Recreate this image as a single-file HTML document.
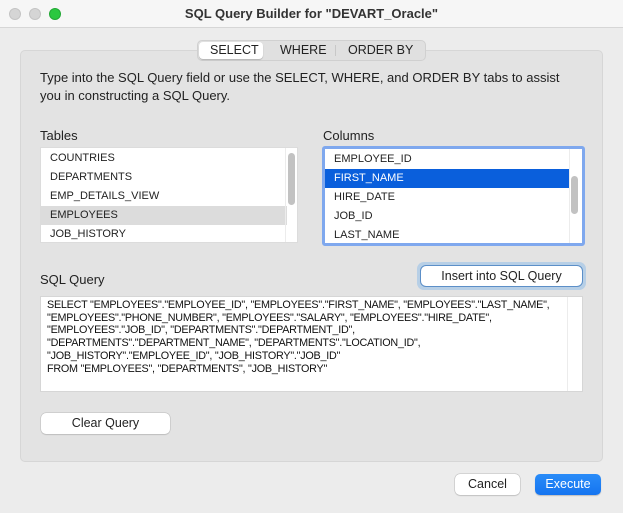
<!DOCTYPE html>
<html><head><meta charset="utf-8"><style>
*{margin:0;padding:0;box-sizing:border-box}
body{width:623px;height:513px;background:#ececec;font-family:"Liberation Sans",sans-serif;color:#222;position:relative;overflow:hidden}
.a{position:absolute}
.title{left:0;top:0;width:623px;height:28px;background:#f6f6f6;border-bottom:1px solid #d6d6d6;text-align:center;font-weight:bold;font-size:13px;line-height:28px;color:#333}
.dot{top:8px;width:12px;height:12px;border-radius:50%}
.panel{left:20px;top:50px;width:583px;height:412px;background:#e3e3e3;border:1px solid #d6d6d6;border-radius:5px}
.seg{left:197px;top:40px;width:229px;height:21px;background:#e0e0e0;border:1px solid #d0d0d0;border-radius:5px;font-size:12.5px}
.seg span{position:absolute;top:2px}
.t{font-size:13px;color:#222}
.list{background:#fff;font-size:11px;color:#222}
.row{height:19px;line-height:19px;padding-left:9px}
.sb{background:#c2c2c2;border-radius:4px;width:7px}
.btn{background:#fff;border-radius:5px;box-shadow:0 0 0 .5px #bbb,0 1px 1px rgba(0,0,0,.15);font-size:12.5px;text-align:center;color:#222}
</style></head><body>
<div class="a title">SQL Query Builder for "DEVART_Oracle"</div>
<div class="a dot" style="left:9px;background:#d5d5d5;border:1px solid #c4c4c4"></div>
<div class="a dot" style="left:29px;background:#d5d5d5;border:1px solid #c4c4c4"></div>
<div class="a dot" style="left:49px;background:#2bc840;border:1px solid #22a835"></div>
<div class="a panel"></div>
<div class="a seg">
 <div class="a" style="left:1px;top:1px;width:64px;height:17px;background:#fff;border-radius:4px;box-shadow:0 1px 1px rgba(0,0,0,.2)"></div>
 <span style="left:12px">SELECT</span><span style="left:82px">WHERE</span>
 <div class="a" style="left:137px;top:4px;width:1px;height:11px;background:#c8c8c8"></div>
 <span style="left:150px">ORDER BY</span>
</div>
<div class="a t" style="left:40px;top:69px;line-height:18px;width:535px">Type into the SQL Query field or use the SELECT, WHERE, and ORDER BY tabs to assist you in constructing a SQL Query.</div>
<div class="a t" style="left:40px;top:128px">Tables</div>
<div class="a t" style="left:323px;top:128px">Columns</div>
<div class="a list" style="left:40px;top:147px;width:258px;height:96px;border:1px solid #dcdcdc;padding-top:1px">
 <div class="row">COUNTRIES</div><div class="row">DEPARTMENTS</div><div class="row">EMP_DETAILS_VIEW</div>
 <div class="row" style="background:#dcdcdc;width:246px">EMPLOYEES</div><div class="row">JOB_HISTORY</div>
 <div class="a" style="left:244px;top:0;width:1px;height:94px;background:#ececec"></div>
 <div class="a sb" style="left:247px;top:5px;height:52px"></div>
</div>
<div class="a list" style="left:322px;top:146px;width:263px;height:100px;border:3px solid #7fa8ee;border-radius:3px;padding-top:1px;overflow:hidden">
 <div class="row">EMPLOYEE_ID</div>
 <div class="row" style="background:#0a5fdc;color:#fff;width:244px">FIRST_NAME</div>
 <div class="row">HIRE_DATE</div><div class="row">JOB_ID</div><div class="row">LAST_NAME</div>
 <div class="a" style="left:244px;top:0;width:1px;height:94px;background:#ececec"></div>
 <div class="a sb" style="left:246px;top:27px;height:38px"></div>
</div>
<div class="a t" style="left:40px;top:272px">SQL Query</div>
<div class="a" style="left:417px;top:262px;width:169px;height:28px;border-radius:7px;background:#b7cfe6"></div>
<div class="a btn" style="left:421px;top:266px;width:161px;height:20px;line-height:20px;box-shadow:0 0 0 1px #5c8fc8">Insert into SQL Query</div>
<div class="a" style="left:40px;top:296px;width:543px;height:96px;background:#fff;border:1px solid #d6d6d6;font-size:10.8px;letter-spacing:-.25px;line-height:12.7px;padding:2px 0 0 6px;color:#111">
SELECT "EMPLOYEES"."EMPLOYEE_ID", "EMPLOYEES"."FIRST_NAME", "EMPLOYEES"."LAST_NAME",<br>"EMPLOYEES"."PHONE_NUMBER", "EMPLOYEES"."SALARY", "EMPLOYEES"."HIRE_DATE",<br>"EMPLOYEES"."JOB_ID", "DEPARTMENTS"."DEPARTMENT_ID",<br>"DEPARTMENTS"."DEPARTMENT_NAME", "DEPARTMENTS"."LOCATION_ID",<br>"JOB_HISTORY"."EMPLOYEE_ID", "JOB_HISTORY"."JOB_ID"<br>FROM "EMPLOYEES", "DEPARTMENTS", "JOB_HISTORY"
 <div class="a" style="left:526px;top:0;width:1px;height:94px;background:#ececec"></div>
</div>
<div class="a btn" style="left:41px;top:413px;width:129px;height:21px;line-height:21px">Clear Query</div>
<div class="a btn" style="left:455px;top:474px;width:65px;height:21px;line-height:21px">Cancel</div>
<div class="a btn" style="left:535px;top:474px;width:66px;height:21px;line-height:21px;background:linear-gradient(#2a8cf8,#1574f0);color:#fff;box-shadow:0 1px 1px rgba(0,0,0,.2)">Execute</div>
</body></html>
